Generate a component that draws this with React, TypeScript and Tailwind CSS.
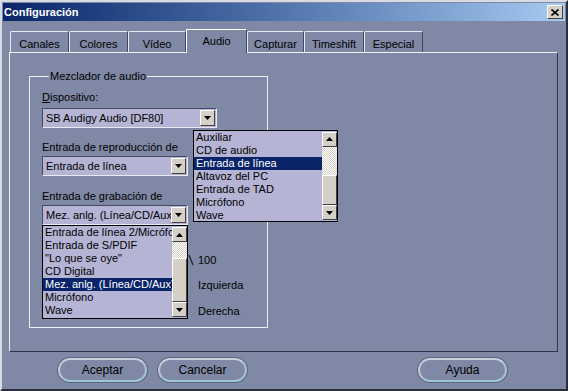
import React from "react";

const tabs = ["Canales", "Colores", "Vídeo", "Audio", "Capturar", "Timeshift", "Especial"];
const tabWidths = [59, 59, 58, 61, 57, 60, 59];

const list1 = ["Auxiliar", "CD de audio", "Entrada de línea", "Altavoz del PC", "Entrada de TAD", "Micrófono", "Wave"];
const list2 = [
  "Entrada de línea 2/Micrófono",
  "Entrada de S/PDIF",
  "\"Lo que se oye\"",
  "CD Digital",
  "Mez. anlg. (Línea/CD/Aux)",
  "Micrófono",
  "Wave",
];

function Arrow({ up }: { up?: boolean }) {
  return (
    <svg width="7" height="4" viewBox="0 0 7 4">
      {up ? <path d="M3.5 0 L7 4 L0 4 Z" fill="#000" /> : <path d="M0 0 L7 0 L3.5 4 Z" fill="#000" />}
    </svg>
  );
}

function SmallButton({ up, className = "" }: { up?: boolean; className?: string }) {
  return (
    <div
      className={`flex items-center justify-center bg-[#d4d0c8] border border-t-white border-l-white border-r-[#404040] border-b-[#404040] ${className}`}
    >
      <Arrow up={up} />
    </div>
  );
}

function Combo({ value, width }: { value: string; width: number }) {
  return (
    <div
      className="flex h-[20px] items-center bg-[#b5b4d4] border border-t-[#454b62] border-l-[#454b62] border-r-[#e8eaf2] border-b-[#e8eaf2] pl-[3px] pr-[1px]"
      style={{ width }}
    >
      <span className="flex-1 overflow-hidden whitespace-nowrap leading-[13px]">{value}</span>
      <SmallButton className="h-[16px] w-[15px] shrink-0" />
    </div>
  );
}

function DropList({
  items,
  selected,
  width,
  height,
  track,
  thumb,
}: {
  items: string[];
  selected: number;
  width: number;
  height: number;
  track: number;
  thumb: number;
}) {
  return (
    <div className="flex overflow-hidden border border-black bg-[#b5b4d4]" style={{ width, height }}>
      <div className="flex-1 overflow-hidden">
        {items.map((it, i) => (
          <div
            key={it}
            className={`h-[13px] whitespace-nowrap pl-[2px] leading-[13px] ${
              i === selected ? "bg-[#0a246a] text-white" : "text-black"
            }`}
          >
            {it}
          </div>
        ))}
      </div>
      <div className="flex w-[15px] flex-col py-px">
        <SmallButton up className="h-[15px]" />
        <div
          className="bg-[repeating-conic-gradient(#d4d0c8_0_25%,#ffffff_0_50%)] bg-[length:2px_2px]"
          style={{ height: track }}
        />
        <div
          className="bg-[#d4d0c8] border border-t-white border-l-white border-r-[#404040] border-b-[#404040]"
          style={{ height: thumb }}
        />
        <div className="flex-1 bg-[repeating-conic-gradient(#d4d0c8_0_25%,#ffffff_0_50%)] bg-[length:2px_2px]" />
        <SmallButton className="h-[15px]" />
      </div>
    </div>
  );
}

function PillButton({ label, className = "" }: { label: string; className?: string }) {
  return (
    <button
      className={`h-[24px] w-[89px] rounded-[12px] border-2 border-t-[#c9cfdc] border-l-[#c0c7d6] border-r-[#a9c2d6] border-b-[#9fc4d8] bg-[#7f88a5] text-[12px] text-black shadow-[0_0_0_1px_#5c647c] ${className}`}
    >
      {label}
    </button>
  );
}

export default function App() {
  return (
    <div className="h-[391px] w-[568px] overflow-hidden bg-[#7f88a5] font-['Liberation_Sans',Arial,sans-serif] text-[11px] text-black">
      <div className="flex h-full flex-col border-2 border-t-[#d8dae4] border-l-[#d8dae4] border-r-[#2a2e3a] border-b-[#2a2e3a] p-px">
        {/* title bar */}
        <div className="flex h-[18px] shrink-0 items-center bg-gradient-to-r from-[#0a246a] to-[#a6caf0] pl-[1px] pr-[2px]">
          <span className="flex-1 text-[11px] font-bold text-white">Configuración</span>
          <div className="flex h-[14px] w-[16px] items-center justify-center bg-[#d4d0c8] border border-t-white border-l-white border-r-[#404040] border-b-[#404040]">
            <svg width="8" height="7" viewBox="0 0 8 7">
              <path d="M0.5 0.5 L7.5 6.5 M7.5 0.5 L0.5 6.5" stroke="#000" strokeWidth="1.6" />
            </svg>
          </div>
        </div>

        {/* tabs */}
        <div className="mt-[8px] flex h-[23px] items-end pl-[7px]">
          {tabs.map((t, i) =>
            t === "Audio" ? (
              <div
                key={t}
                className="relative z-10 -mb-px flex h-[24px] items-start justify-center border-l border-t border-white border-r border-r-[#404860] bg-[#7f88a5] pt-[3px] text-[11px]"
                style={{ width: tabWidths[i] }}
              >
                {t}
              </div>
            ) : (
              <div
                key={t}
                className="flex h-[21px] items-start justify-center rounded-t-[2px] border-l border-t border-[#e8eaf0] border-r border-r-[#404860] pt-[4px] text-[11px]"
                style={{ width: tabWidths[i] }}
              >
                {t}
              </div>
            )
          )}
        </div>

        {/* panel */}
        <div className="ml-[6px] h-[300px] w-[549px] border border-t-[#eef0f4] border-l-[#eef0f4] border-r-[#30364a] border-b-[#30364a] pl-[19px] pt-[17px]">
          <fieldset className="relative h-[258px] w-[239px] border border-[#eef0f4] px-[12px]">
            <legend className="ml-[7px] px-[1px] leading-[13px]">Mezclador de audio</legend>
            <div className="mt-[8px] leading-[13px]">
              <span className="underline">D</span>ispositivo:
            </div>
            <div className="mt-[4px]">
              <Combo value="SB Audigy Audio [DF80]" width={175} />
            </div>
            <div className="mt-[13px] leading-[13px]">Entrada de reproducción de</div>
            <div className="mt-[2px]">
              <Combo value="Entrada de línea" width={146} />
            </div>
            <div className="mt-[14px] leading-[13px]">Entrada de grabación de</div>
            <div className="relative mt-[2px]">
              <Combo value="Mez. anlg. (Línea/CD/Aux)" width={146} />
              <div className="absolute left-0 top-full z-20">
                <DropList items={list2} selected={4} width={146} height={94} track={16} thumb={44} />
              </div>
            </div>
            <div className="relative pl-[156px] pt-[29px] leading-[13px]">
              <svg className="absolute left-[146px] top-[29px]" width="6" height="12" viewBox="0 0 6 12">
                <path d="M1 1 L5 11" stroke="#2a2e3e" strokeWidth="1.5" />
              </svg>
              <div>100</div>
              <div className="mt-[12px]">Izquierda</div>
              <div className="mt-[13px]">Derecha</div>
            </div>

            <div className="absolute left-[163px] top-[47px] z-20">
              <DropList items={list1} selected={2} width={145} height={92} track={29} thumb={31} />
            </div>
          </fieldset>
        </div>

        {/* buttons */}
        <div className="mt-[6px] flex pl-[55px]">
          <PillButton label="Aceptar" />
          <PillButton label="Cancelar" className="ml-[11px]" />
          <PillButton label="Ayuda" className="ml-[171px]" />
        </div>
      </div>
    </div>
  );
}
